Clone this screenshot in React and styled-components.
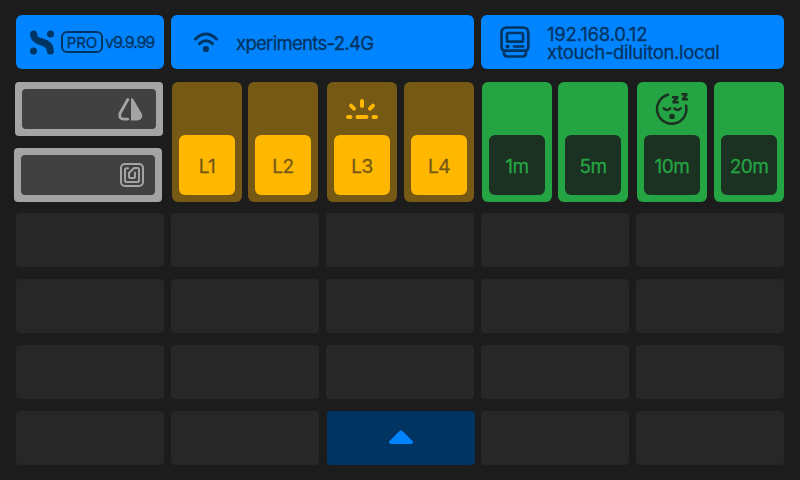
import React from "react";
import styled, { createGlobalStyle } from "styled-components";

const GlobalStyle = createGlobalStyle`
  * { box-sizing: border-box; }
  body { margin: 0; background: #1c1c1c; overflow: hidden; }
`;

const Screen = styled.main`
  width: 800px;
  height: 480px;
  padding: 15px 16px 0;
  background: #1c1c1c;
  font-family: Inter, sans-serif;
  font-feature-settings: "cv11";
  font-size: 19px;
`;

const Header = styled.header`
  display: grid;
  grid-template-columns: 148px 303px 303px;
  gap: 7px;
  height: 54px;
  color: #003462;
`;

const Panel = styled.section`
  display: flex;
  align-items: center;
  height: 54px;
  padding-left: ${(p) => p.$inset}px;
  border-radius: 6px;
  background: #0084ff;
  white-space: nowrap;
`;

const Icon = styled.svg`
  display: block;
  flex: none;
  fill: none;
  stroke: currentColor;
  stroke-width: ${(p) => p.$stroke || 2};
  stroke-linecap: round;
  stroke-linejoin: round;
`;

const ProBadge = styled.span`
  width: 42px;
  height: 22px;
  margin-left: 6px;
  border: 2px solid currentColor;
  border-radius: 6px;
  font-size: 15px;
  line-height: 19px;
  letter-spacing: -0.1px;
  text-align: center;
  -webkit-text-stroke: 0.3px currentColor;
`;

const Version = styled.span`
  margin-left: 2px;
  font-size: 16px;
  line-height: 20px;
  letter-spacing: -1.1px;
  -webkit-text-stroke: 0.3px currentColor;
`;

const Label = styled.div`
  margin-left: ${(p) => p.$gap}px;
  margin-top: ${(p) => p.$top || 0}px;
  font-size: 18.5px;
  line-height: 18px;
  letter-spacing: -0.7px;
  -webkit-text-stroke: 0.3px currentColor;
`;

const Address = styled.div`
  letter-spacing: ${(p) => p.$tracking}px;
`;

const Controls = styled.section`
  display: grid;
  grid-template-columns: 148px 303px 303px;
  gap: 7px;
  height: 120px;
  margin-top: 13px;
`;

const Sensors = styled.div`
  display: grid;
  gap: 12px;
`;

const Sensor = styled.div`
  width: 148px;
  height: 54px;
  margin-left: ${(p) => p.$shift}px;
  padding: 7px;
  border-radius: 4px;
  background: #a4a4a4;
`;

const SensorWell = styled.div`
  display: flex;
  align-items: center;
  justify-content: flex-end;
  width: 134px;
  height: 40px;
  padding-right: ${(p) => p.$inset}px;
  border-radius: 4px;
  background: #414141;
  color: #a4a4a4;
`;

const KeyGroup = styled.div`
  display: grid;
  grid-template-columns: 70px 70px 70px 70px;
  padding-left: 1px;
`;

const Key = styled.div`
  display: flex;
  flex-direction: column;
  justify-content: space-between;
  align-items: center;
  width: 70px;
  height: 120px;
  padding: 11px 7px 7px;
  margin-left: ${(p) => p.$shift}px;
  border-radius: 6px;
  background: ${(p) => (p.$tone === "light" ? "#755914" : "#25a443")};
  color: ${(p) => (p.$tone === "light" ? "#ffb700" : "#1b3121")};
`;

const KeySymbol = styled.div`
  height: 32px;
`;

const KeyCap = styled.button`
  width: 56px;
  height: 60px;
  padding: 3px 0 0;
  border: 0;
  border-radius: 6px;
  background: ${(p) => (p.$tone === "light" ? "#ffb700" : "#1b3121")};
  color: ${(p) => (p.$tone === "light" ? "#755914" : "#25a443")};
  font: inherit;
  font-feature-settings: "cv11";
  line-height: 22px;
  letter-spacing: -0.5px;
  -webkit-text-stroke: 0.3px currentColor;
`;

const Slots = styled.section`
  display: grid;
  grid-template-columns: repeat(5, 148px);
  grid-auto-rows: 54px;
  gap: 12px 7px;
  margin-top: 11px;
`;

const Slot = styled.div`
  border-radius: 4px;
  background: #272727;
`;

const ExpandButton = styled(Slot)`
  display: flex;
  align-items: center;
  justify-content: center;
  margin: 0 -1px 0 1px;
  padding-bottom: 2px;
  background: #003462;
  color: #0084ff;
`;

const LogoIcon = () => (
  <Icon width="25" height="25" viewBox="0 0 25 25">
    <path d="M3.6 4C3.6 9 7 10.7 12 12C17 13.3 20.4 15.5 20.4 20.9" strokeWidth="7" />
    <g fill="currentColor" stroke="none">
      <circle cx="20.5" cy="3.9" r="3.5" />
      <circle cx="3.5" cy="21" r="3.5" />
    </g>
  </Icon>
);

const WifiIcon = () => (
  <Icon width="26" height="22" viewBox="0 0 26 22" $stroke={3}>
    <path d="M2.5 8Q13 -2 23.5 8M6.5 12.7Q13 6.8 19.5 12.7" />
    <circle cx="13" cy="18" r="3.1" fill="currentColor" stroke="none" />
  </Icon>
);

const DeviceIcon = () => (
  <Icon width="30" height="32" viewBox="0 0 30 32" $stroke={2.7}>
    <path d="M7 1.5H23Q28.3 1.5 28.3 7V20.5Q28.3 24.7 24.5 24.7H5.5Q1.5 24.7 1.5 20.5V7Q1.5 1.5 7 1.5ZM4 25V27Q4 30.5 7.5 30.5H22.5Q26 30.5 26 27V25" />
    <rect x="7" y="7" width="16" height="8.7" rx="1.5" />
    <path d="M14 20.5H23" />
    <circle cx="7.5" cy="20.5" r="2" fill="currentColor" stroke="none" />
  </Icon>
);

const MirrorIcon = () => (
  <Icon width="25" height="25" viewBox="0 0 25 25" $stroke={2.8}>
    <path d="M9.8 2.5L2 16.5Q0.8 22.1 6 22.1H9.8" />
    <path d="M13 1.3Q15 1 15.5 2.5L23.3 16C25.7 20.3 23 23.5 19 23.5H13Z" fill="currentColor" stroke="none" />
  </Icon>
);

const SpiralIcon = () => (
  <Icon width="24" height="24" viewBox="0 0 24 24">
    <rect x="1" y="1" width="22" height="22" rx="4" />
    <path d="M8 5.2L6.8 5.2Q5 5.2 5 7V17.5Q5 19 6.5 19H17.5Q19 19 19 17.5V6.5Q19 5 17.5 5H14L9 10V13.5Q9 15 10.5 15H13.5Q15 15 15 13.5V9.5" />
  </Icon>
);

const LightIcon = () => (
  <Icon width="32" height="32" viewBox="0 0 32 32" $stroke={4}>
    <path d="M16 8V13M5 12.7L8 15.7M27 12.7L24 15.7M2 24H4.5M11.5 24H20.5M27.5 24H30" />
  </Icon>
);

const SleepIcon = () => (
  <Icon width="34" height="34" viewBox="0 0 34 34" $stroke={2.5}>
    <path d="M13 1.8A14.7 14.7 0 1 0 31 12.5" />
    <path d="M8.8 15.4Q12 18.6 15.2 15.4M19.3 15.4Q22.5 18.6 25.7 15.4" />
    <path d="M18.3 4.2H22.2V4.9L18.6 8.5V9.2H22.5M27.6 1.3H31.3V2L28 5.7V6.3H31.7" strokeWidth="2.4" strokeLinecap="square" strokeLinejoin="miter" />
    <circle cx="17" cy="23.5" r="2.8" fill="currentColor" stroke="none" />
  </Icon>
);

const lights = [["L1", 0], ["L2", 6], ["L3", 15], ["L4", 22]];
const timers = [["1m", 0], ["5m", 6], ["10m", 15], ["20m", 22]];

const Keys = ({ items, tone, SymbolIcon }) => (
  <KeyGroup>
    {items.map(([label, shift], index) => (
      <Key key={label} $shift={shift} $tone={tone}>
        <KeySymbol>{index === 2 && <SymbolIcon />}</KeySymbol>
        <KeyCap $tone={tone}>{label}</KeyCap>
      </Key>
    ))}
  </KeyGroup>
);

export default function App() {
  return (
    <Screen>
      <GlobalStyle />
      <Header>
        <Panel $inset={14}>
          <LogoIcon /><ProBadge>PRO</ProBadge><Version>v9.9.99</Version>
        </Panel>
        <Panel $inset={22}>
          <WifiIcon /><Label $gap={17} $top={1}>xperiments-2.4G</Label>
        </Panel>
        <Panel $inset={19}>
          <DeviceIcon />
          <Label $gap={17} $top={2}>
            <Address $tracking={-0.2}>192.168.0.12</Address>
            <Address $tracking={-0.33}>xtouch-diluiton.local</Address>
          </Label>
        </Panel>
      </Header>
      <Controls>
        <Sensors>
          <Sensor $shift={-1}><SensorWell $inset={13}><MirrorIcon /></SensorWell></Sensor>
          <Sensor $shift={-2}><SensorWell $inset={11}><SpiralIcon /></SensorWell></Sensor>
        </Sensors>
        <Keys items={lights} tone="light" SymbolIcon={LightIcon} />
        <Keys items={timers} tone="timer" SymbolIcon={SleepIcon} />
      </Controls>
      <Slots>
        {Array.from({ length: 20 }, (_, index) => index === 17 ? (
          <ExpandButton key={index}>
            <Icon width="26" height="18" viewBox="0 0 26 18">
              <path d="M2 14L12 4Q13 3 14 4L24 14Q24 15 23 15H3Q2 15 2 14Z" fill="currentColor" />
            </Icon>
          </ExpandButton>
        ) : <Slot key={index} />)}
      </Slots>
    </Screen>
  );
}
